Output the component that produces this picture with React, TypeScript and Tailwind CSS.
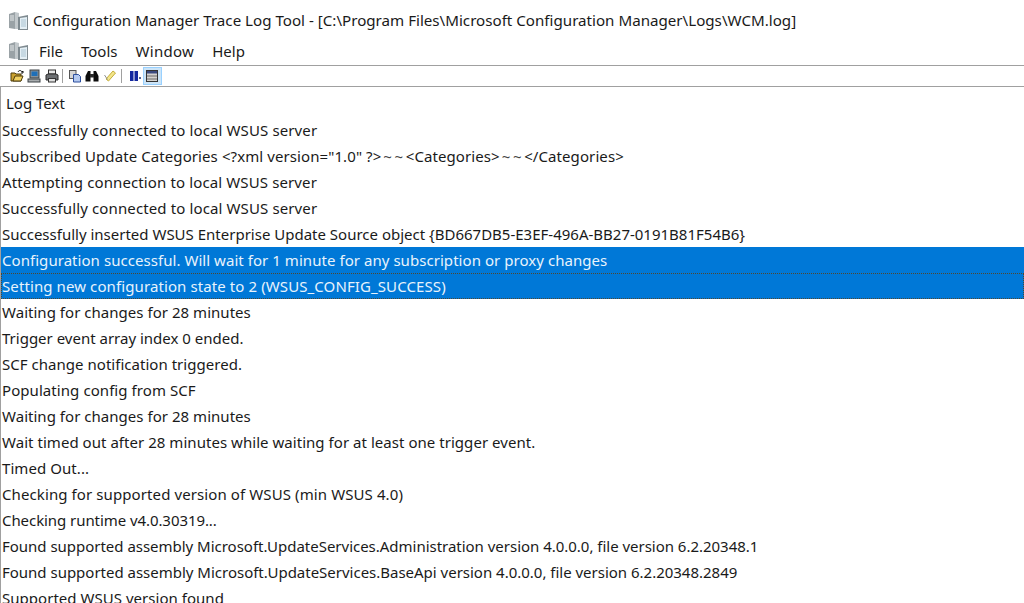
import type { ReactNode } from "react";

function Tildes() {
  return <span className="ml-[2px] tracking-[2.6px] text-[#444]">~~</span>;
}

const rows: { text: ReactNode; selected?: boolean; focused?: boolean; fit?: string }[] = [
  { text: "Successfully connected to local WSUS server", fit: "tracking-[0.12px]" },
  {
    text: (
      <>
        Subscribed Update Categories &lt;?xml version="1.0" ?&gt;
        <Tildes />
        &lt;Categories&gt;
        <Tildes />
        &lt;/Categories&gt;
      </>
    ),
    fit: "tracking-[0.09px]",
  },
  { text: "Attempting connection to local WSUS server", fit: "tracking-[0.12px]" },
  { text: "Successfully connected to local WSUS server", fit: "tracking-[0.12px]" },
  { text: "Successfully inserted WSUS Enterprise Update Source object {BD667DB5-E3EF-496A-BB27-0191B81F54B6}" },
  { text: "Configuration successful. Will wait for 1 minute for any subscription or proxy changes", selected: true, fit: "tracking-[0.05px]" },
  { text: "Setting new configuration state to 2 (WSUS_CONFIG_SUCCESS)", selected: true, focused: true, fit: "tracking-[0.1px]" },
  { text: "Waiting for changes for 28 minutes", fit: "tracking-[0.03px]" },
  { text: "Trigger event array index 0 ended." },
  { text: "SCF change notification triggered.", fit: "tracking-[0.03px]" },
  { text: "Populating config from SCF", fit: "tracking-[0.07px]" },
  { text: "Waiting for changes for 28 minutes", fit: "tracking-[0.03px]" },
  { text: "Wait timed out after 28 minutes while waiting for at least one trigger event.", fit: "tracking-[0.04px]" },
  { text: "Timed Out...", fit: "tracking-[0.07px]" },
  { text: "Checking for supported version of WSUS (min WSUS 4.0)", fit: "tracking-[0.1px]" },
  { text: "Checking runtime v4.0.30319...", fit: "tracking-[-0.07px]" },
  { text: "Found supported assembly Microsoft.UpdateServices.Administration version 4.0.0.0, file version 6.2.20348.1", fit: "tracking-[-0.02px]" },
  { text: "Found supported assembly Microsoft.UpdateServices.BaseApi version 4.0.0.0, file version 6.2.20348.2849", fit: "tracking-[-0.01px]" },
  { text: "Supported WSUS version found", fit: "tracking-[0.03px]" },
];

function AppIcon() {
  return (
    <svg width="22" height="22" viewBox="0 0 22 22" className="shrink-0 blur-[0.4px]">
      <path d="M1 4l6-2v17l-6-1z" fill="#9aa2a6" />
      <path d="M7 2l4 1v16l-4 0z" fill="#c2c8cb" />
      <path d="M2 6h4M2 8h4M2 10h4" stroke="#e6e9ea" />
      <path d="M10 7l10-2v15l-10 0z" fill="#7f8a90" />
      <path d="M12 8l7-1v12h-7z" fill="#e4eff5" />
      <path d="M13 10h5M13 12h5M13 14h5M13 16h5" stroke="#a9c2d0" />
    </svg>
  );
}

function Tool({ children, active }: { children: ReactNode; active?: boolean }) {
  return (
    <div className={active ? "flex h-[16px] w-[17px] items-center justify-center bg-[#cce4f7] outline-1 outline-[#99d1ff]" : "flex h-[16px] w-[17px] items-center justify-center"}>
      <svg width="14" height="14" viewBox="0 0 14 14" className="blur-[0.3px]">{children}</svg>
    </div>
  );
}

export default function App() {
  return (
    <div className="h-[603px] w-[1024px] overflow-hidden bg-white text-[15px] leading-[26px] text-[#1a1a1a] [font-family:'Noto_Sans',sans-serif]">
      <div className="flex h-[37px] items-center gap-[3px] pl-[8px] pt-[4px]">
        <AppIcon />
        <span className="-translate-y-px text-[15.15px] whitespace-nowrap">Configuration Manager Trace Log Tool - [C:\Program Files\Microsoft Configuration Manager\Logs\WCM.log]</span>
      </div>
      <div className="flex h-[28px] items-center pl-[8px]">
        <AppIcon />
        <div className="ml-[9px] flex gap-[18px]">
          <span>File</span>
          <span>Tools</span>
          <span className="tracking-[0.3px]">Window</span>
          <span>Help</span>
        </div>
      </div>
      <div className="flex h-[22px] items-center gap-[0.5px] border-y border-[#a0a0a0] pl-[8px]">
        <Tool>
          <path d="M1 4h4l1 1h5v7H1z" fill="#c9a02e" stroke="#4f3d0c" />
          <path d="M3 12l2-5h8l-2 5z" fill="#f0d060" stroke="#4f3d0c" />
          <path d="M8 3c1-2 3-2 4 0M12 3l1-1v2h-2" fill="none" stroke="#111" />
        </Tool>
        <Tool>
          <rect x="3" y="1" width="9" height="8" fill="#8a9298" stroke="#3d4246" />
          <rect x="4.5" y="2.5" width="6" height="4.5" fill="#1f6fb8" />
          <rect x="1" y="10" width="12" height="3" fill="#a8acae" stroke="#3d4246" />
        </Tool>
        <Tool>
          <rect x="3.5" y="1" width="7" height="4" fill="#e6e6e6" stroke="#333" />
          <path d="M1 6l2-1h8l2 1v5H1z" fill="#6c6f72" stroke="#2a2a2a" />
          <rect x="3.5" y="9.5" width="7" height="3.5" fill="#e0e0e0" stroke="#333" />
        </Tool>
        <div className="ml-[1.5px] mr-[2.5px] h-[14px] w-px bg-[#a0a0a0]" />
        <Tool>
          <rect x="1.5" y="1.5" width="6.5" height="8" fill="#d6d6d6" stroke="#555" />
          <path d="M5.5 5.5h5l2 2v5.5h-7z" fill="#b4c9ef" stroke="#2d4f9e" />
        </Tool>
        <Tool>
          <path d="M0.5 12.5V7l2.5-5h2.5v10.5zM13.5 12.5V7L11 2H8.5v10.5z" fill="#0d0d0d" />
          <rect x="5" y="5" width="4" height="3.5" fill="#2a2a2a" />
        </Tool>
        <Tool>
          <path d="M3 10l7-8 2.5 2-7 8z" fill="#f4e68a" stroke="#c3ad3a" />
          <path d="M1.5 6l3 4.5" stroke="#8f8f8f" fill="none" />
        </Tool>
        <div className="ml-[2.5px] mr-[3.5px] h-[14px] w-px bg-[#a0a0a0]" />
        <Tool>
          <rect x="2" y="2" width="3.5" height="10" fill="#14289e" />
          <rect x="6.5" y="2" width="3.5" height="10" fill="#14289e" />
          <rect x="11" y="8" width="2" height="2" fill="#54648f" />
        </Tool>
        <Tool active>
          <rect x="1.5" y="1.5" width="11" height="11" fill="#d4d2cf" stroke="#333" />
          <rect x="2" y="2" width="10" height="2.5" fill="#3a4a80" />
          <path d="M2 7h10M2 10h10" stroke="#6a6a6a" />
        </Tool>
      </div>
      <div className="h-[516px] overflow-hidden border-l border-[#a0a0a0]">
        <div className="h-[30px] pl-[5px] pt-[3px]">Log Text</div>
        {rows.map((row, i) => (
          <div
            key={i}
            className={`h-[26px] whitespace-nowrap pl-px leading-[26px] ${row.selected ? "bg-[#0078d7] text-[#e8f3fc]" : ""} ${row.focused ? "outline-1 -outline-offset-1 outline-dotted outline-[#4f4630]" : ""} ${row.fit ?? ""}`}
          >
            {row.text}
          </div>
        ))}
      </div>
    </div>
  );
}
